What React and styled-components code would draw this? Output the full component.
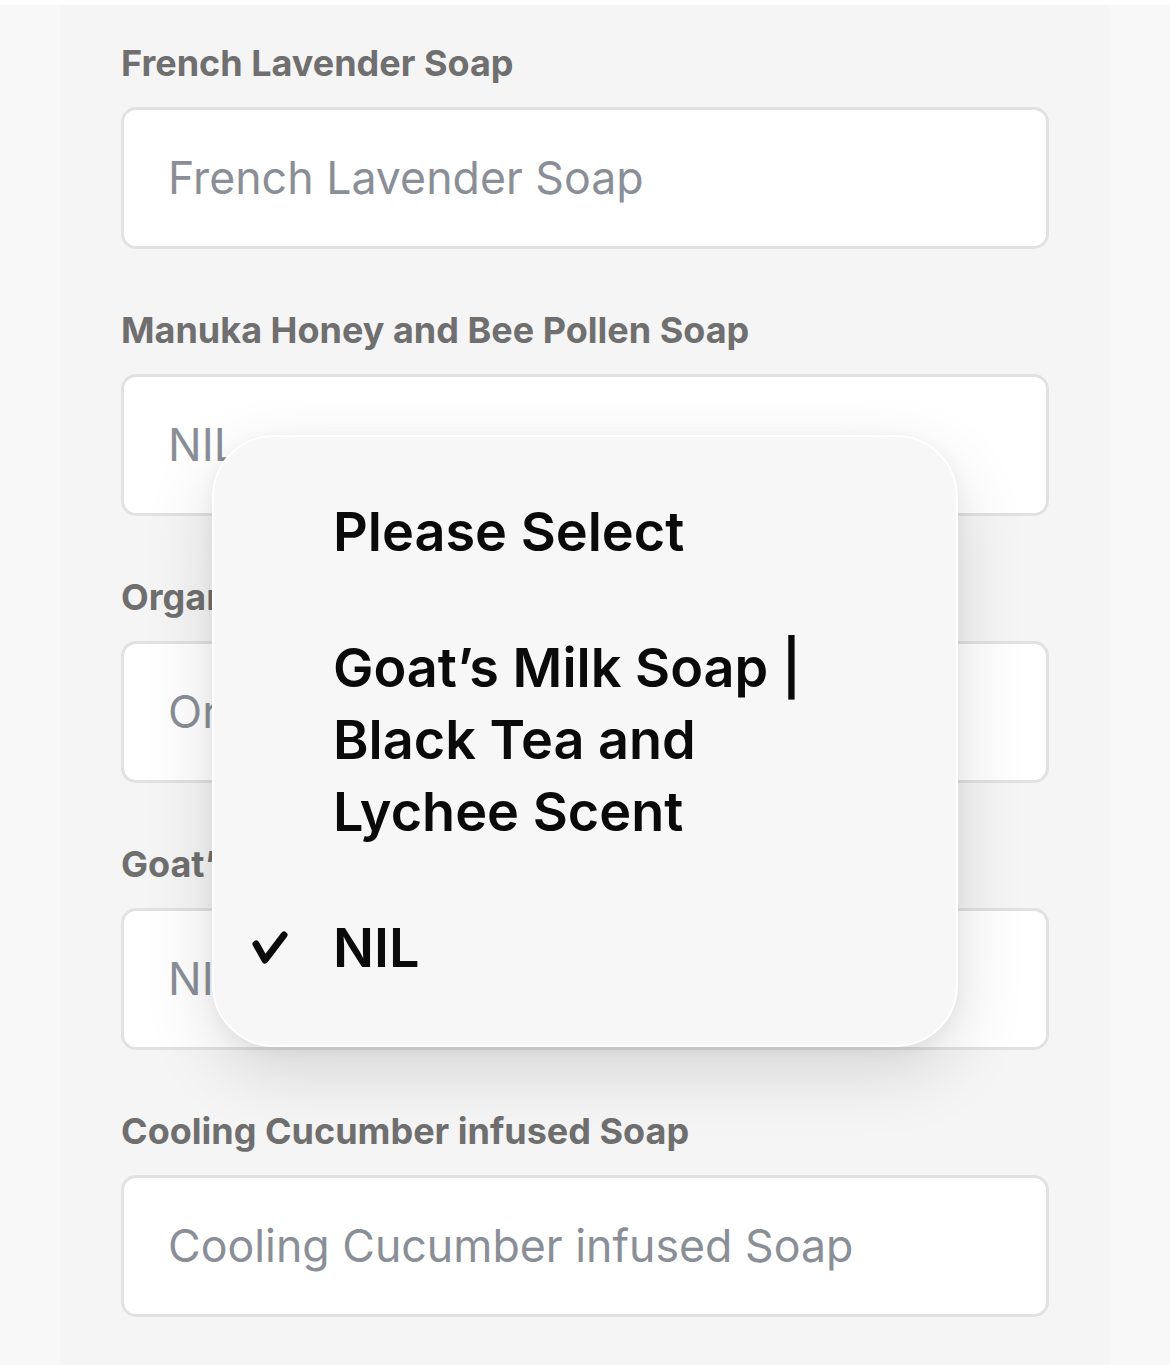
import React from "react";
import styled, { createGlobalStyle } from "styled-components";

const GlobalStyle = createGlobalStyle`
  * { box-sizing: border-box; }
  body {
    margin: 0;
    background: #f8f8f8;
    font-family: "Inter", "Noto Sans", sans-serif;
  }
`;

const fields = [
  { label: "French Lavender Soap", value: "French Lavender Soap" },
  { label: "Manuka Honey and Bee Pollen Soap", value: "NIL" },
  { label: "Organic Oatmeal and Honey Soap", value: "Organic Oatmeal and Honey Soap" },
  { label: "Goat’s Milk Soap | Black Tea and Lychee Scent", value: "NIL" },
  { label: "Cooling Cucumber infused Soap", value: "Cooling Cucumber infused Soap" },
];

const options = [
  { text: "Please Select" },
  { text: "Goat’s Milk Soap | Black Tea and Lychee Scent" },
  { text: "NIL", checked: true },
];

function App() {
  return (
    <>
      <GlobalStyle />
      <Page>
        <Panel>
          {fields.map((f, i) => (
            <Field key={i}>
              <Label>{f.label}</Label>
              <InputBox>{f.value}</InputBox>
            </Field>
          ))}
          <Menu>
            {options.map((o, i) => (
              <Option key={i}>
                <Check>
                  {o.checked && (
                    <svg width="40" height="40" viewBox="0 0 40 40">
                      <polyline
                        points="6,16 15,32 34,7"
                        fill="none"
                        stroke="#0a0a0a"
                        strokeWidth="7"
                        strokeLinecap="round"
                        strokeLinejoin="round"
                      />
                    </svg>
                  )}
                </Check>
                <OptionText>{o.text}</OptionText>
              </Option>
            ))}
          </Menu>
        </Panel>
      </Page>
    </>
  );
}

export default App;

const Page = styled.div`
  width: 1170px;
  height: 1365px;
  padding-top: 5px;
  background: #f8f8f8;
  position: relative;
  overflow: hidden;
  &::before {
    content: "";
    position: absolute;
    top: 0;
    left: 0;
    right: 0;
    height: 5px;
    background: #ffffff;
  }
`;

const Panel = styled.div`
  position: relative;
  margin: 0 60px;
  height: 1360px;
  background: #f5f5f5;
  padding: 38px 61px 0 61px;
`;

const Field = styled.div`
  display: flex;
  flex-direction: column;
  margin-bottom: 61px;
`;

const Label = styled.div`
  font-size: 36px;
  line-height: 40px;
  font-weight: 700;
  color: #6f6f6f;
  margin-bottom: 24px;
  white-space: nowrap;
`;

const InputBox = styled.div`
  height: 142px;
  width: 928px;
  display: flex;
  align-items: center;
  padding-left: 44px;
  background: #ffffff;
  border: 3px solid #e1e1e4;
  border-radius: 15px;
  font-size: 44.7px;
  color: #8a8f97;
  white-space: nowrap;
  overflow: hidden;
`;

const Menu = styled.div`
  position: absolute;
  left: 152px;
  top: 430px;
  width: 746px;
  height: 612px;
  padding: 27px 60px 0 0;
  background: #f7f7f7;
  border: 2px solid #ffffff;
  border-radius: 62px;
  box-shadow: 0 24px 70px rgba(0, 0, 0, 0.13), 0 4px 16px rgba(0, 0, 0, 0.05);
  display: flex;
  flex-direction: column;
`;

const Option = styled.div`
  display: flex;
  align-items: flex-start;
  padding: 32px 0;
`;

const Check = styled.div`
  width: 119px;
  flex: none;
  display: flex;
  justify-content: flex-end;
  padding-right: 43px;
  padding-top: 16px;
`;

const OptionText = styled.div`
  font-size: 54px;
  line-height: 72px;
  font-weight: 600;
  color: #0a0a0a;
  max-width: 520px;
`;
